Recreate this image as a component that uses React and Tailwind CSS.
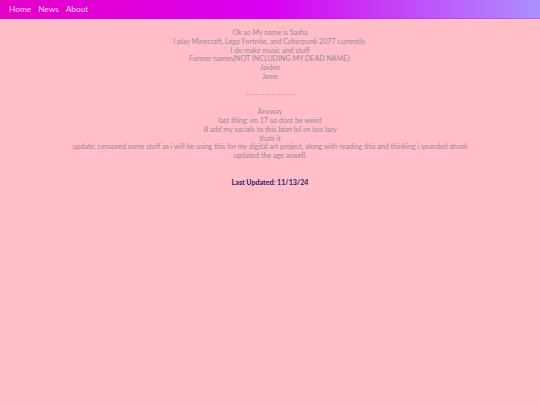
export default function App() {
  const lines = [
    'Ok so My name is Sasha',
    'I play Minecraft, Lego Fortnite, and Cyberpunk 2077 currently.',
    'I do make music and stuff',
    'Former names(NOT INCLUDING MY DEAD NAME):',
    'Jaiden',
    'Jame',
  ]
  const more = [
    'Anyway',
    'last thing: im 17 so dont be weird',
    'ill add my socials to this later lol im too lazy',
    'thats it',
    'update: censored some stuff as i will be using this for my digital art project, along with reading this and thinking i sounded drunk',
    'updated the age aswell.',
  ]

  return (
    <div className="min-h-[405px] bg-[#ffbec8] font-['Lato','Open_Sans',sans-serif]">
      <nav className="h-[19px] flex items-center gap-[7px] px-[9px] bg-[linear-gradient(to_right,#e600c6,#da00f2_50%,#ac90ff)] border-b border-[#d000b0]/30">
        <a className="text-[8.3px] text-[#ffd0f4]">Home</a>
        <a className="text-[8.3px] text-[#ffd0f4]">News</a>
        <a className="text-[8.3px] text-[#ffd0f4]">About</a>
      </nav>

      <div className="pt-[10px] text-center text-[7.1px] leading-[8.8px] text-[#9c8a93]">
        {lines.map(l => <div key={l}>{l}</div>)}
        <div className="h-[8.8px]" />
        <div className="tracking-[0.7px]">---------------</div>
        <div className="h-[8.8px]" />
        {more.map(l => <div key={l}>{l}</div>)}
        <div className="h-[18px]" />
        <div className="font-bold text-[#2c1a68]">Last Updated: 11/13/24</div>
      </div>
    </div>
  )
}
